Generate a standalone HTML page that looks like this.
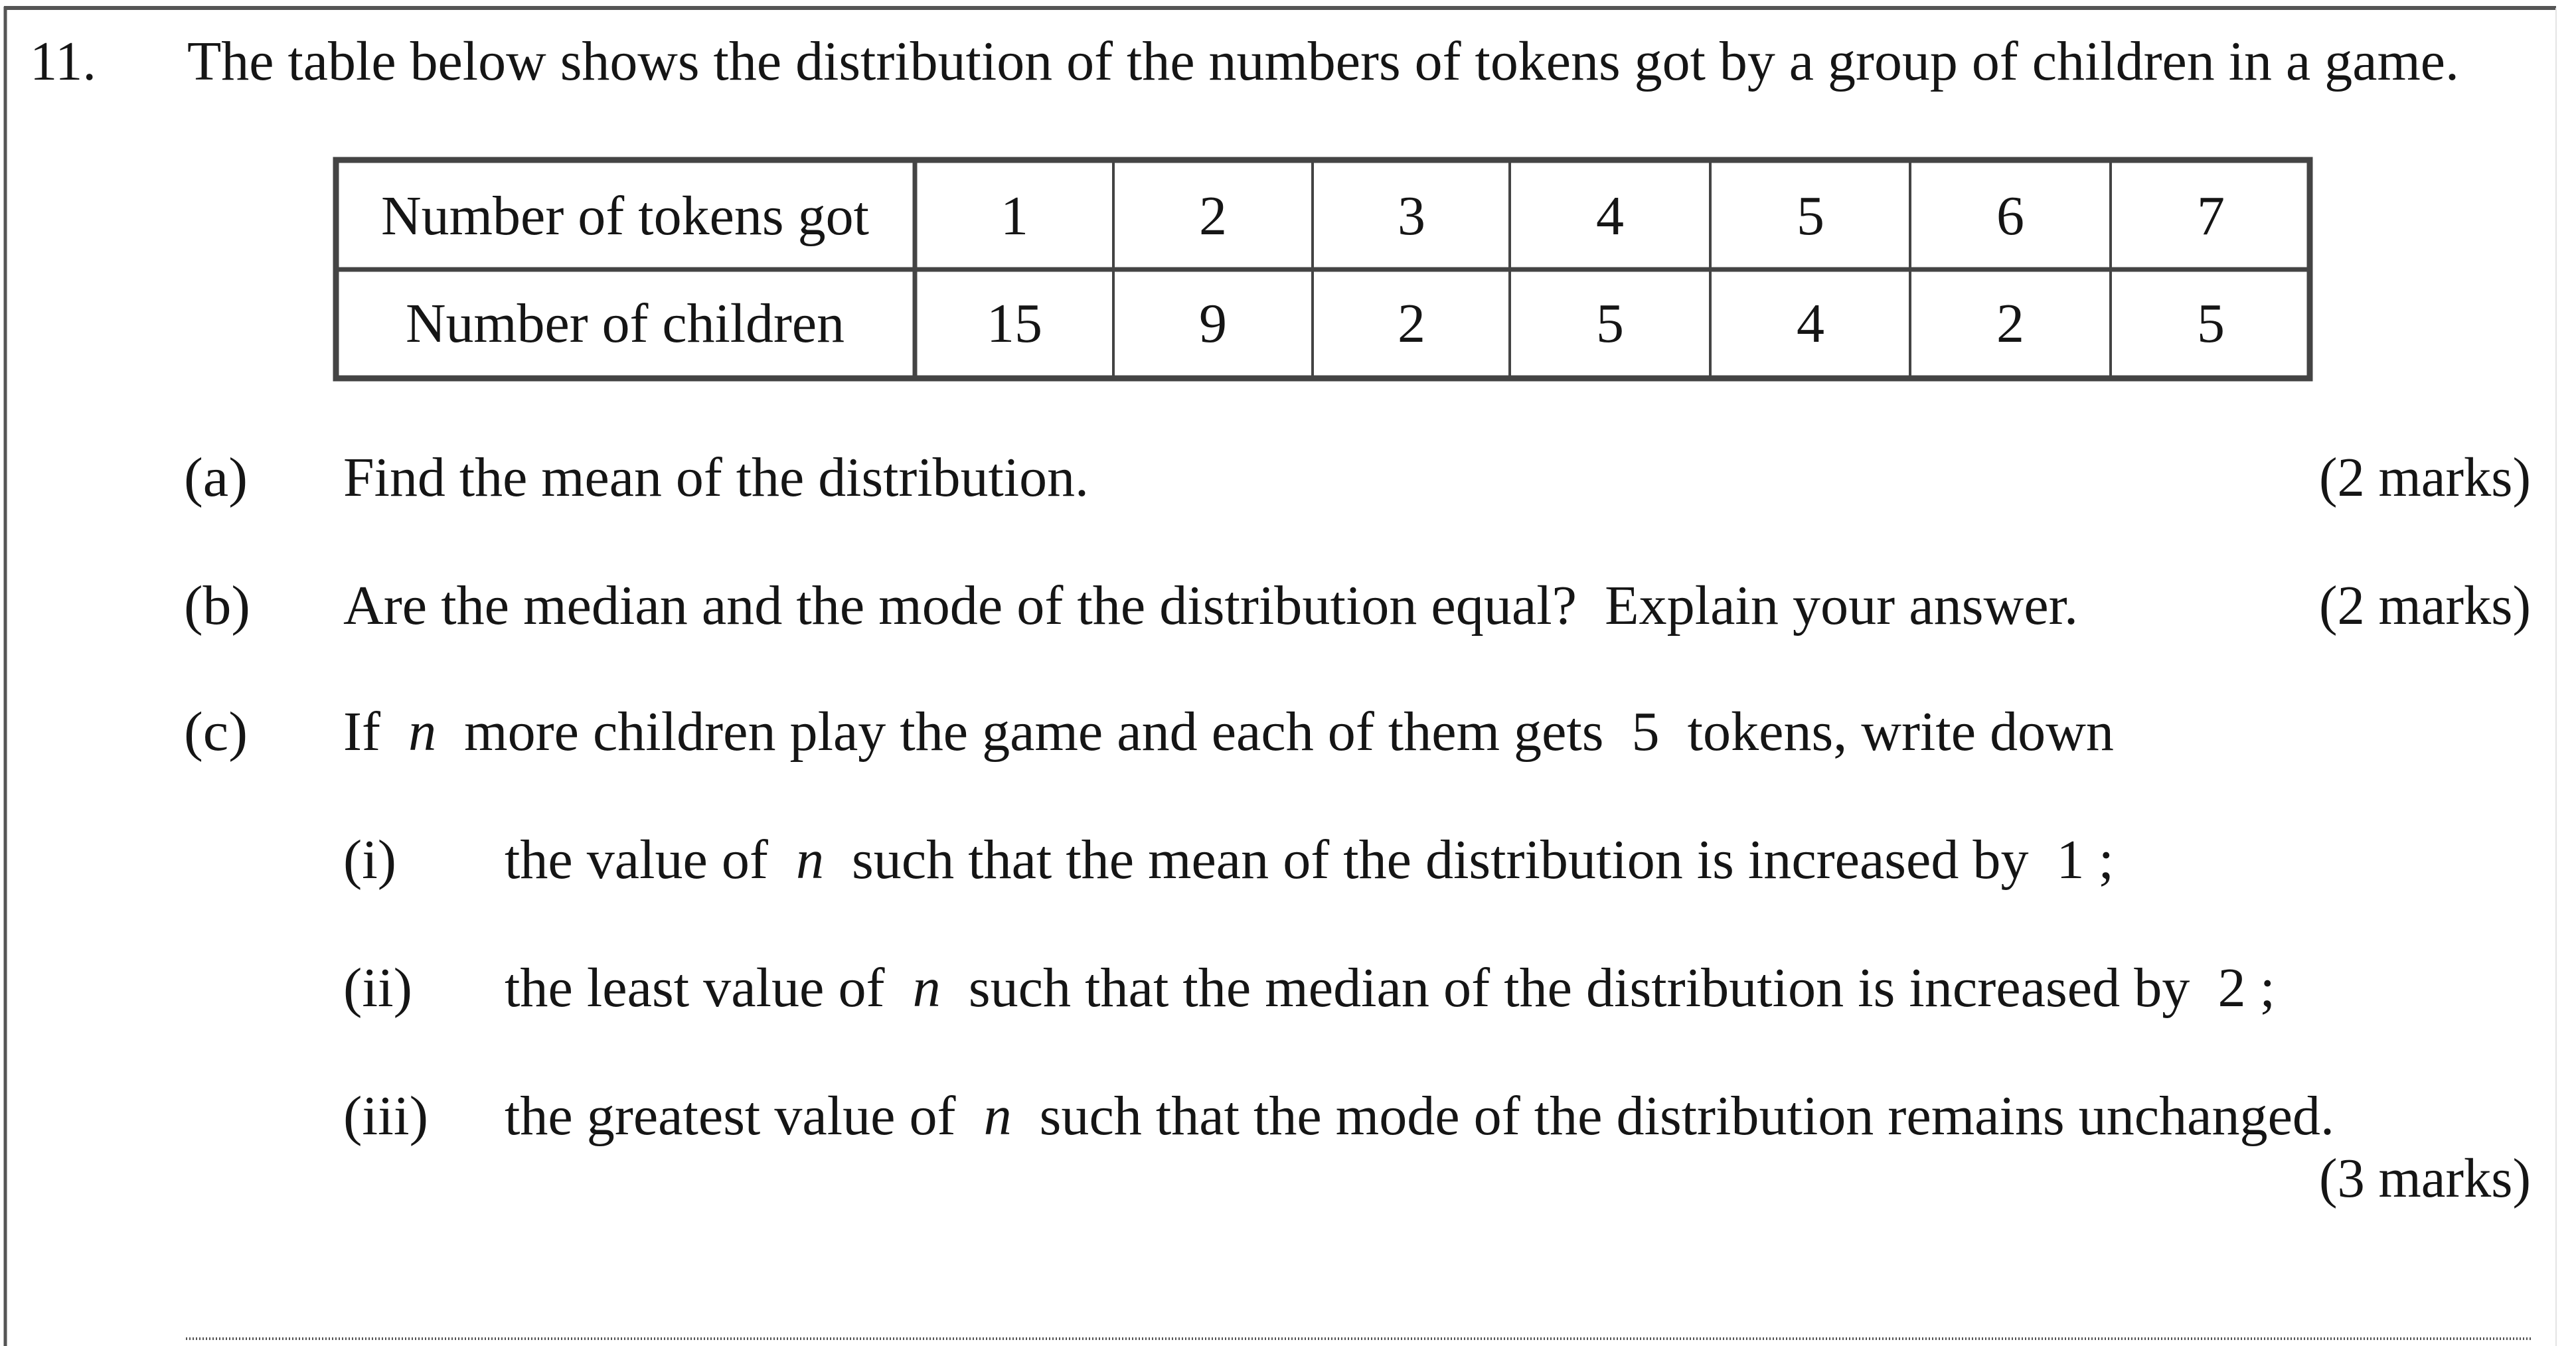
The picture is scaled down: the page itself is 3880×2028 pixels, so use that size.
<!DOCTYPE html>
<html><head><meta charset="utf-8"><style>html,body{margin:0;padding:0;background:#fff}svg{display:block}text{white-space:pre}</style></head>
<body>
<svg width="3880" height="2028" viewBox="0 0 3880 2028" xmlns="http://www.w3.org/2000/svg" font-family="'Liberation Serif', serif" font-size="84" fill="#151515">
<rect width="3880" height="2028" fill="#fff"/>
<line x1="6" y1="12" x2="3850" y2="12" stroke="#555" stroke-width="6"/>
<line x1="8" y1="10" x2="8" y2="2028" stroke="#555" stroke-width="5"/>
<line x1="3850" y1="12" x2="3850" y2="2028" stroke="#e4e4e4" stroke-width="2"/>
<text x="45" y="120" textLength="100" lengthAdjust="spacingAndGlyphs">11.</text>
<text x="282" y="120" textLength="3422" lengthAdjust="spacingAndGlyphs">The table below shows the distribution of the numbers of tokens got by a group of children in a game.</text>
<g stroke="#444" fill="none">
<rect x="506" y="241" width="2973" height="329" stroke-width="9"/>
<line x1="506" y1="406" x2="3479" y2="406" stroke-width="7"/>
<line x1="1378" y1="241" x2="1378" y2="570" stroke-width="7"/>
<line x1="1677" y1="241" x2="1677" y2="570" stroke-width="4"/>
<line x1="1977" y1="241" x2="1977" y2="570" stroke-width="4"/>
<line x1="2274" y1="241" x2="2274" y2="570" stroke-width="4"/>
<line x1="2576" y1="241" x2="2576" y2="570" stroke-width="4"/>
<line x1="2877" y1="241" x2="2877" y2="570" stroke-width="4"/>
<line x1="3179" y1="241" x2="3179" y2="570" stroke-width="4"/>
</g>
<text x="574" y="353" textLength="735" lengthAdjust="spacingAndGlyphs">Number of tokens got</text>
<text x="611" y="515" textLength="661" lengthAdjust="spacingAndGlyphs">Number of children</text>
<g text-anchor="middle">
<text x="1528" y="353">1</text><text x="1827" y="353">2</text><text x="2126" y="353">3</text><text x="2425" y="353">4</text><text x="2727" y="353">5</text><text x="3028" y="353">6</text><text x="3330" y="353">7</text>
<text x="1528" y="515">15</text><text x="1827" y="515">9</text><text x="2126" y="515">2</text><text x="2425" y="515">5</text><text x="2727" y="515">4</text><text x="3028" y="515">2</text><text x="3330" y="515">5</text>
</g>
<text x="277" y="747" textLength="96" lengthAdjust="spacingAndGlyphs">(a)</text>
<text x="517" y="747" textLength="1123" lengthAdjust="spacingAndGlyphs">Find the mean of the distribution.</text>
<text x="3493" y="747" textLength="319" lengthAdjust="spacingAndGlyphs">(2 marks)</text>
<text x="277" y="940" textLength="100" lengthAdjust="spacingAndGlyphs">(b)</text>
<text x="517" y="940" textLength="2613" lengthAdjust="spacingAndGlyphs">Are the median and the mode of the distribution equal?  Explain your answer.</text>
<text x="3493" y="940" textLength="319" lengthAdjust="spacingAndGlyphs">(2 marks)</text>
<text x="277" y="1130" textLength="96" lengthAdjust="spacingAndGlyphs">(c)</text>
<text x="517" y="1130" textLength="2667" lengthAdjust="spacingAndGlyphs">If  <tspan font-style="italic">n</tspan>  more children play the game and each of them gets  5  tokens, write down</text>
<text x="517" y="1323" textLength="80" lengthAdjust="spacingAndGlyphs">(i)</text>
<text x="760" y="1323" textLength="2424" lengthAdjust="spacingAndGlyphs">the value of  <tspan font-style="italic">n</tspan>  such that the mean of the distribution is increased by  1 ;</text>
<text x="517" y="1516" textLength="104" lengthAdjust="spacingAndGlyphs">(ii)</text>
<text x="760" y="1516" textLength="2667" lengthAdjust="spacingAndGlyphs">the least value of  <tspan font-style="italic">n</tspan>  such that the median of the distribution is increased by  2 ;</text>
<text x="517" y="1709" textLength="128" lengthAdjust="spacingAndGlyphs">(iii)</text>
<text x="760" y="1709" textLength="2756" lengthAdjust="spacingAndGlyphs">the greatest value of  <tspan font-style="italic">n</tspan>  such that the mode of the distribution remains unchanged.</text>
<text x="3493" y="1803" textLength="319" lengthAdjust="spacingAndGlyphs">(3 marks)</text>
<line x1="280" y1="2017" x2="3812" y2="2017" stroke="#555" stroke-width="4" stroke-dasharray="2 3"/>
</svg>
</body></html>
